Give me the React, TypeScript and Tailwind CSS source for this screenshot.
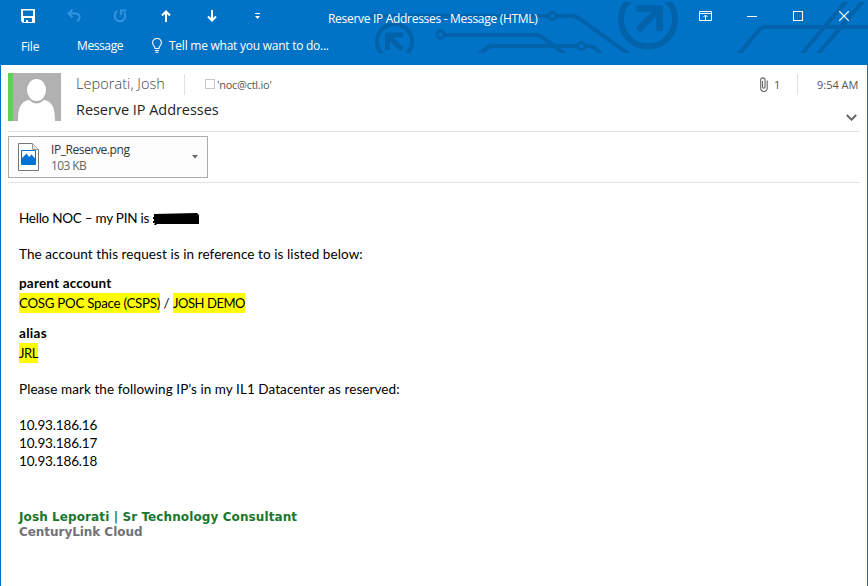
import React from "react";

const ui = "font-['Open_Sans','Noto_Sans',sans-serif]";

function Circuit() {
  return (
    <svg
      className="pointer-events-none absolute left-0 top-[2px]"
      width="868"
      height="51"
      viewBox="0 2 868 51"
      fill="none"
      stroke="#0262aa"
      strokeWidth="4"
    >
      <circle cx="394.5" cy="41.5" r="17.5" />
      <path d="M387.500 50V35H403M388.500 36L402 49.500" strokeWidth="5" />
      <circle cx="375" cy="16" r="3" strokeWidth="2.5" />
      <path d="M379 16H548" strokeWidth="3.5" />
      <circle cx="552.5" cy="16" r="3.5" strokeWidth="3" />
      <path d="M556 16H571Q576 16 580 19L630 55" />
      <circle cx="440.5" cy="34.7" r="3.7" strokeWidth="2.8" />
      <path d="M444 35H535Q539 35 542 37L566 55" />
      <path d="M478 55L487 48Q490 46 494 46H577" />
      <circle cx="581.5" cy="46" r="3.7" strokeWidth="2.8" />
      <path d="M585 46H589Q596 47 602 55" />
      <circle cx="648" cy="19.5" r="27" strokeWidth="6" />
      <path d="M636.500 8.500H659.500V31M659 9L638 30" strokeWidth="6.500" />
      <path d="M738 55L759 30Q762 27 765 27H868" />
      <path d="M801 55L847 0M817 55L864 0" />
    </svg>
  );
}

function Slot({ children }: { children: React.ReactNode }) {
  return <div className="flex h-8 w-[46px] shrink-0 items-center justify-center">{children}</div>;
}

function TitleBar() {
  return (
    <div className="relative flex h-8 items-start pl-[5px]">
      <div className="flex">
        <Slot>
          <svg width="14" height="14" viewBox="0 0 14 14" className="fill-white">
            <path fillRule="evenodd" d="M0 0H14V14H2L0 12ZM2 1.500V7H12V1.500ZM3 9V13H5V11H7V13H11V9Z" />
          </svg>
        </Slot>
        <Slot>
          <svg width="14" height="14" viewBox="0 0 14 14" fill="none" stroke="#3292dc" strokeWidth="2">
            <path d="M5.500 .5L1.500 4.500L5.500 8.500M2 4.500H8.500C13.500 4.500 14 9.500 10 12.500" />
          </svg>
        </Slot>
        <Slot>
          <svg width="14" height="14" viewBox="0 0 14 14" fill="none" stroke="#3292dc" strokeWidth="2">
            <path d="M4.500 2.200A5.300 5.300 0 1 0 11 3.500M8 6V1.500H13" />
          </svg>
        </Slot>
        <Slot>
          <svg width="10" height="12" viewBox="0 0 10 12" fill="none" stroke="#fff" strokeWidth="2">
            <path d="M5 12V1.500M1 5.500L5 1.500L9 5.500" />
          </svg>
        </Slot>
        <Slot>
          <svg width="10" height="12" viewBox="0 0 10 12" fill="none" stroke="#fff" strokeWidth="2">
            <path d="M5 0V10.500M1 6.500L5 10.500L9 6.500" />
          </svg>
        </Slot>
        <Slot>
          <svg width="6" height="6" viewBox="0 0 6 6" fill="#fff">
            <path d="M0 0H5V1H0ZM0 3H5L2.500 6Z" />
          </svg>
        </Slot>
      </div>
      <div className={`${ui} ml-[47px] mt-[9px] w-[210px] whitespace-nowrap text-[12px] leading-[20px] tracking-[-0.3px] text-white`}>
        Reserve IP Addresses - Message (HTML)
      </div>
      <div className="ml-[145px] flex">
        <Slot>
          <svg width="14" height="10" viewBox="0 0 14 10" fill="none" stroke="#fff">
            <path d="M.5 .5H12.500V9.500H.5ZM.5 2.500H12.500M6.500 9V4M4.500 6L6.500 4L8.500 6" />
          </svg>
        </Slot>
        <Slot>
          <div className="h-px w-[10px] bg-white" />
        </Slot>
        <Slot>
          <div className="size-[10px] border border-white" />
        </Slot>
        <Slot>
          <svg width="10" height="10" viewBox="0 0 10 10" stroke="#fff" strokeWidth="1.200">
            <path d="M0 0L10 10M10 0L0 10" />
          </svg>
        </Slot>
      </div>
    </div>
  );
}

function Ribbon() {
  return (
    <div className={`${ui} relative flex h-[33px] items-start whitespace-nowrap pl-[21px] text-[12px] leading-[20px] text-white`}>
      <div className="mt-[5px] w-14 tracking-[-0.2px]">File</div>
      <div className="mt-1 w-[75px] tracking-[-0.4px]">Message</div>
      <svg className="mt-[6px]" width="10" height="15" viewBox="0 0 10 15" fill="none" stroke="#fff" strokeWidth="1.100">
        <path d="M3 10.500C3 8 .6 7.500 .6 4.800A4.400 4.400 0 0 1 9.400 4.800C9.400 7.500 7 8 7 10.500ZM3 12.500H7M3.500 14.300H6.500" />
      </svg>
      <div className="ml-[7px] mt-1 tracking-[-0.25px]">Tell me what you want to do...</div>
    </div>
  );
}

function MailHeader() {
  return (
    <div className={`${ui} mx-[7px] flex h-[67px] border-b border-[#e1e1e1] pt-2`}>
      <div className="flex h-12 w-[53px] bg-[#b1b1b1]">
        <div className="w-[5px] bg-[#5dd255]" />
        <svg width="48" height="48" viewBox="0 0 48 48" fill="#fff">
          <ellipse cx="23.500" cy="17" rx="9.500" ry="11" />
          <path d="M5 48C5 36 7 28.500 16 27Q23.500 34 31 27C40 28.500 42 36 42 48Z" />
        </svg>
      </div>
      <div className="ml-[15px] flex-1 whitespace-nowrap">
        <div className="flex h-[22px] items-center">
          <div className="w-[108px] text-[14.500px] font-light leading-[22px] tracking-[0.05px] text-[#444]">Leporati, Josh</div>
          <div className="h-[21px] w-px bg-[#e1e1e1]" />
          <div className="ml-5 size-[10px] border border-[#c6c6c6]" />
          <div className="ml-[2px] mt-[2px] text-[11px] leading-[20px] tracking-[-0.25px] text-[#555]">'noc@ctl.io'</div>
        </div>
        <div className="mt-[3px] text-[14.500px] leading-[24px] tracking-[-0.05px] text-[#262626]">Reserve IP Addresses</div>
      </div>
      <div className="flex w-[100px] flex-col">
        <div className="flex h-[22px] items-center text-[11px] leading-[20px] text-[#555]">
          <svg width="8" height="15" viewBox="0 0 8 15" fill="none" stroke="#666" strokeWidth="1.100">
            <path d="M2.500 4V10C2.500 11.500 5 11.500 5 10V3C5 .2 .7 .2 .7 3V11C.7 15.500 7.200 15.500 7.200 11V3.500" />
          </svg>
          <div className="ml-[6px] mt-[2px] w-[23px]">1</div>
          <div className="h-[21px] w-px bg-[#e1e1e1]" />
          <div className="ml-[19px] mt-[2px] whitespace-nowrap">9:54 AM</div>
        </div>
        <svg className="ml-[86px] mt-[19px]" width="11" height="8" viewBox="0 0 11 8" fill="none" stroke="#666" strokeWidth="2">
          <path d="M.8 1L5.500 5.700L10.200 1" />
        </svg>
      </div>
    </div>
  );
}

function Attachment() {
  return (
    <div className={`${ui} mx-[7px] h-[51px] border-b border-[#e1e1e1] pt-1`}>
      <div className="flex h-[42px] w-[200px] items-center border border-[#ababab] bg-[#fdfdfd] pl-[9px] text-[12px]">
        <svg width="21" height="28" viewBox="0 0 21 28" fill="none">
          <path d="M.5 .5H14.500L20.500 6.500V27.500H.5Z" fill="#fff" stroke="#777" />
          <path d="M14.500 .5V6.500H20.500" stroke="#999" fill="#e8e8e8" />
          <path d="M3.500 7.500H17.500V21.500H3.500Z" stroke="#0173c7" />
          <path d="M4 15L8.500 10.500L11 14L13.500 11.500L17 15.500V21H4Z" fill="#0173d6" />
        </svg>
        <div className="ml-[12px] mt-[2px] w-[141px] whitespace-nowrap leading-4">
          <div className="tracking-[-0.42px] text-[#333]">IP_Reserve.png</div>
          <div className="tracking-[-0.6px] text-[#666]">103 KB</div>
        </div>
        <svg width="6" height="4" viewBox="0 0 6 4" fill="#666">
          <path d="M0 0H6L3 3.500Z" />
        </svg>
      </div>
    </div>
  );
}

function Body() {
  return (
    <div className="whitespace-nowrap pl-[18px] pt-[26px] font-['Lato','Open_Sans',sans-serif] text-[13.500px] leading-[18px] text-black">
      <p className="flex">
        <span className="w-[131px] tracking-[-0.25px]">Hello NOC – my PIN is</span>
        <svg className="ml-[2px] mt-1" width="47" height="13" viewBox="0 0 47 13">
          <path d="M2 1L45 0L47 2V11H5L4 12H2L3 10H1V8H2V6H1V4H2Z" />
        </svg>
      </p>
      <p className="mt-[18px] tracking-[0.085px]">The account this request is in reference to is listed below:</p>
      <p className="mt-[10px] h-5 font-bold leading-5 tracking-[0.18px]">parent account</p>
      <p className="flex h-5 leading-5">
        <span className="w-[141px] bg-[#ff0] text-[13.300px] tracking-[-0.26px]">COSG POC Space (CSPS)</span>
        <span className="w-[13px] text-center">/</span>
        <span className="w-[72px] bg-[#ff0] text-[13px] tracking-[-0.45px]">JOSH DEMO</span>
      </p>
      <p className="mt-[10px] h-5 font-bold leading-5 tracking-[0.3px]">alias</p>
      <p className="flex h-5 leading-5">
        <span className="w-[19px] bg-[#ff0] text-[13px] tracking-[-0.5px]">JRL</span>
      </p>
      <p className="mt-[17px] tracking-[0.070px]">Please mark the following IP’s in my IL1 Datacenter as reserved:</p>
      <div className="mt-[18px] tracking-[-0.15px]">
        <p>10.93.186.16</p>
        <p>10.93.186.17</p>
        <p>10.93.186.18</p>
      </div>
      <div className="mt-[40px] font-['DejaVu_Sans',sans-serif] text-[12px] font-bold leading-[15px]">
        <p className="tracking-[0.1px] text-[#17772e]">Josh Leporati | Sr Technology Consultant</p>
        <p className="tracking-[-0.05px] text-[#717276]">CenturyLink Cloud</p>
      </div>
    </div>
  );
}

export default function App() {
  return (
    <div className="h-[586px] w-[868px] overflow-hidden bg-white">
      <header className="relative h-[65px] bg-[#0173c7]">
        <Circuit />
        <TitleBar />
        <Ribbon />
      </header>
      <main className="h-[521px] border-x border-[#0173c7]">
        <MailHeader />
        <Attachment />
        <Body />
      </main>
    </div>
  );
}
